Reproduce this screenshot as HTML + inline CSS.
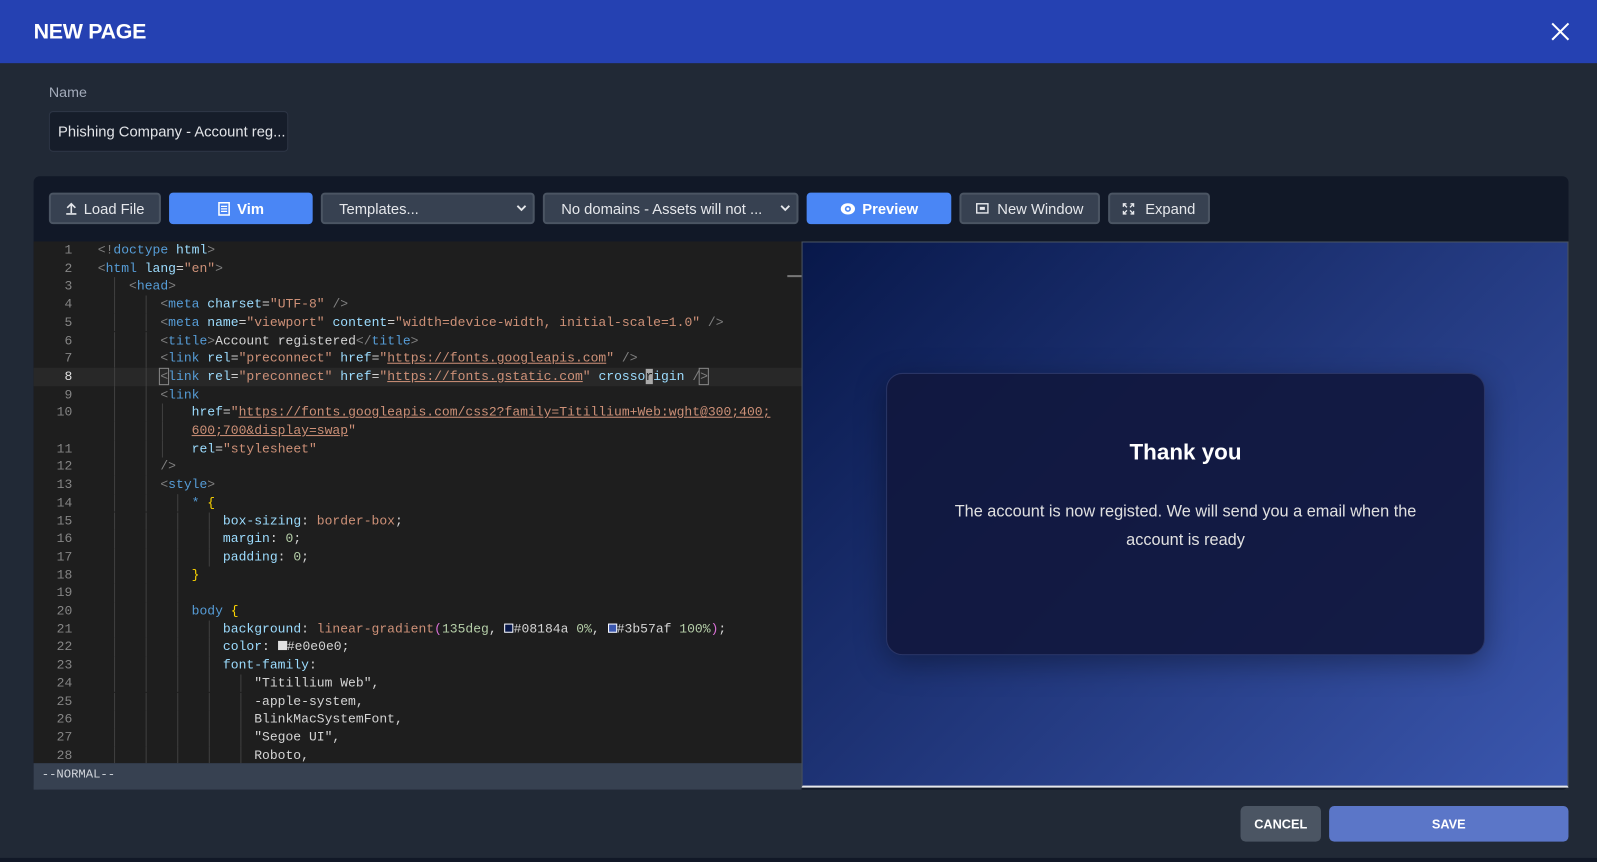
<!DOCTYPE html>
<html><head><meta charset="utf-8"><style>
html,body{margin:0;padding:0;background:#212936;overflow:hidden;width:1597px;height:862px}
#w{position:absolute;left:0;top:0;width:1568px;height:846px;transform:scale(1.01849,1.01891);transform-origin:0 0;font-family:"Liberation Sans",sans-serif;background:#212936}
.hdr{position:absolute;left:0;top:0;width:1568px;height:62px;background:#2541b2}
.hdr .t{position:absolute;left:33px;top:20px;color:#fff;font-size:21px;font-weight:bold;letter-spacing:-.3px}
.lbl{position:absolute;left:48px;top:82px;color:#a3abba;font-size:14px}
.inp{position:absolute;left:48px;top:109px;width:235px;height:40px;background:#161d2a;border:1px solid #2d3545;border-radius:4px;box-sizing:border-box;color:#e2e4e8;font-size:14.5px;line-height:41px;padding-left:8px;white-space:nowrap;overflow:hidden}
.panel{position:absolute;left:33px;top:173px;width:1507px;height:602px;background:#111827;border-radius:6px}
.b{position:absolute;top:189px;height:31px;box-sizing:border-box;border:2px solid #4b5563;background:#374151;border-radius:4px;color:#e5e7eb;font-size:14.5px;line-height:31px;text-align:center;white-space:nowrap}
.b.p{background:#4a86f5;border-color:#4a86f5;color:#fff;font-weight:bold}
.b.s{text-align:left;padding-left:16px}
.b.s svg.c{position:absolute;right:6px;top:10px}
.ed{position:absolute;left:33px;top:237px;width:754px;height:512px;background:#1e1e1e;overflow:hidden}
.ln{position:absolute;left:0;width:754px;height:17.7px;font-family:"Liberation Mono",monospace;font-size:12.8px;line-height:17.7px;white-space:pre;color:#d4d4d4}
.ln .n{position:absolute;left:0;width:38px;text-align:right;color:#858585}
.ln .c{position:absolute;left:63px}
.g{position:absolute;top:0;height:17.7px;width:1px;background:#404040}
.cur{background:#282828}
.tb{color:#808080}.tg{color:#569cd6}.at{color:#9cdcfe}.st{color:#ce9178}.u{color:#ce9178;text-decoration:underline}.nu{color:#b5cea8}.y{color:#ffd700}.pk{color:#da70d6}
.status{position:absolute;left:33px;top:749px;width:754px;height:26px;background:#374151;color:#d1d5db;font-family:"Liberation Mono",monospace;font-size:12px;line-height:22px;padding-left:8px;box-sizing:border-box}
.pv{position:absolute;left:787px;top:237px;width:753px;height:536px;background:linear-gradient(135deg,#08184a 0%,#3b57af 100%);border:1px solid #4b5563;border-bottom:2px solid #e5e7eb;box-sizing:border-box}
.card{position:absolute;left:82px;top:128px;width:588px;height:277px;background:rgba(17,24,62,.93);border:1px solid #2a3566;border-radius:16px;box-sizing:border-box;box-shadow:0 8px 30px rgba(0,0,0,.35);text-align:center;color:#e0e0e0}
.card h1{margin:64px 0 0;font-size:22px;font-weight:bold;color:#fff}
.card p{margin:32px 0 0;font-size:16px;line-height:28px}
.btn2{position:absolute;top:791px;height:35px;border-radius:5px;color:#fff;font-weight:bold;font-size:12.5px;line-height:36px;text-align:center}
</style></head><body><div id="w">
<div class="hdr"><div class="t">NEW PAGE</div>
<svg style="position:absolute;left:1523px;top:22px" width="18" height="18" viewBox="0 0 18 18"><path d="M1 1L17 17M17 1L1 17" stroke="#fff" stroke-width="2"/></svg></div>
<div class="lbl">Name</div>
<div class="inp">Phishing Company - Account reg...</div>
<div class="panel"></div>
<div class="b" style="left:48px;width:110px"><svg width="12" height="13" viewBox="0 0 12 13" style="vertical-align:-1px;margin-right:6px"><path d="M6 11V2M2 6l4-4 4 4M1 12h10" stroke="#e5e7eb" stroke-width="1.6" fill="none"/></svg>Load File</div>
<div class="b p" style="left:166px;width:141px"><svg width="12" height="14" viewBox="0 0 12 14" style="vertical-align:-2px;margin-right:7px"><rect x="1" y="1" width="10" height="12" fill="none" stroke="#fff" stroke-width="1.5"/><path d="M3 4.5h6M3 7h6M3 9.5h6" stroke="#fff" stroke-width="1.2"/></svg>Vim</div>
<div class="b s" style="left:315px;width:210px">Templates...<svg class="c" width="10" height="7" viewBox="0 0 10 7"><path d="M1 1l4 4 4-4" stroke="#e5e7eb" stroke-width="1.8" fill="none"/></svg></div>
<div class="b s" style="left:533px;width:251px">No domains - Assets will not ...<svg class="c" width="10" height="7" viewBox="0 0 10 7"><path d="M1 1l4 4 4-4" stroke="#e5e7eb" stroke-width="1.8" fill="none"/></svg></div>
<div class="b p" style="left:792px;width:142px"><svg width="15" height="12" viewBox="0 0 15 12" style="vertical-align:-1px;margin-right:7px"><ellipse cx="7.5" cy="6" rx="7" ry="5.5" fill="#fff"/><circle cx="7.5" cy="6" r="3" fill="#4a86f5"/><circle cx="7.5" cy="6" r="1.4" fill="#fff"/></svg>Preview</div>
<div class="b" style="left:942px;width:138px"><svg width="13" height="11" viewBox="0 0 13 11" style="vertical-align:0;margin-right:8px"><rect x="1" y="1" width="11" height="9" fill="none" stroke="#e5e7eb" stroke-width="1.4"/><path d="M4 4h5v3H4z" fill="#e5e7eb"/></svg>New Window</div>
<div class="b" style="left:1088px;width:100px"><svg width="12" height="12" viewBox="0 0 12 12" style="vertical-align:-1px;margin-right:10px"><path d="M1 4V1h3M8 1h3v3M11 8v3H8M4 11H1V8M1 1l3.5 3.5M11 1L7.5 4.5M11 11L7.5 7.5M1 11l3.5-3.5" stroke="#e5e7eb" stroke-width="1.3" fill="none"/></svg>Expand</div>

<div class="ed">
<div style="position:absolute;left:740px;top:33px;width:14px;height:2px;background:#777"></div>
<div class="ln" style="top:0"><span class="n">1</span><span class="c"><span class="tb">&lt;!</span><span class="tg">doctype</span> <span class="at">html</span><span class="tb">&gt;</span></span></div>
<div class="ln" style="top:17.7px"><span class="n">2</span><span class="c"><span class="tb">&lt;</span><span class="tg">html</span> <span class="at">lang</span>=<span class="st">"en"</span><span class="tb">&gt;</span></span></div>
<div class="ln" style="top:35.4px"><span class="g" style="left:79px"></span><span class="n">3</span><span class="c">    <span class="tb">&lt;</span><span class="tg">head</span><span class="tb">&gt;</span></span></div>
<div class="ln" style="top:53.1px"><span class="g" style="left:79px"></span><span class="g" style="left:110px"></span><span class="n">4</span><span class="c">        <span class="tb">&lt;</span><span class="tg">meta</span> <span class="at">charset</span>=<span class="st">"UTF-8"</span> <span class="tb">/&gt;</span></span></div>
<div class="ln" style="top:70.8px"><span class="g" style="left:79px"></span><span class="g" style="left:110px"></span><span class="n">5</span><span class="c">        <span class="tb">&lt;</span><span class="tg">meta</span> <span class="at">name</span>=<span class="st">"viewport"</span> <span class="at">content</span>=<span class="st">"width=device-width, initial-scale=1.0"</span> <span class="tb">/&gt;</span></span></div>
<div class="ln" style="top:88.5px"><span class="g" style="left:79px"></span><span class="g" style="left:110px"></span><span class="n">6</span><span class="c">        <span class="tb">&lt;</span><span class="tg">title</span><span class="tb">&gt;</span>Account registered<span class="tb">&lt;/</span><span class="tg">title</span><span class="tb">&gt;</span></span></div>
<div class="ln" style="top:106.2px"><span class="g" style="left:79px"></span><span class="g" style="left:110px"></span><span class="n">7</span><span class="c">        <span class="tb">&lt;</span><span class="tg">link</span> <span class="at">rel</span>=<span class="st">"preconnect"</span> <span class="at">href</span>=<span class="st">"</span><span class="u">https://fonts.googleapis.com</span><span class="st">"</span> <span class="tb">/&gt;</span></span></div>
<div class="ln cur" style="top:123.9px"><span class="g" style="left:79px"></span><span class="g" style="left:110px"></span><span class="n" style="color:#e0e0e0">8</span><span class="c">        <span class="tb" style="outline:1px solid #888">&lt;</span><span class="tg">link</span> <span class="at">rel</span>=<span class="st">"preconnect"</span> <span class="at">href</span>=<span class="st">"</span><span class="u">https://fonts.gstatic.com</span><span class="st">"</span> <span class="at">crosso<span style="background:#aaa;color:#1e1e1e">r</span>igin</span> <span class="tb">/<span style="outline:1px solid #888">&gt;</span></span></span></div>
<div class="ln" style="top:141.6px"><span class="g" style="left:79px"></span><span class="g" style="left:110px"></span><span class="n">9</span><span class="c">        <span class="tb">&lt;</span><span class="tg">link</span></span></div>
<div class="ln" style="top:159.3px"><span class="g" style="left:79px"></span><span class="g" style="left:110px"></span><span class="g" style="left:126px"></span><span class="n">10</span><span class="c">            <span class="at">href</span>=<span class="st">"</span><span class="u">https://fonts.googleapis.com/css2?family=Titillium+Web:wght@300;400;</span></span></div>
<div class="ln" style="top:177px"><span class="g" style="left:79px"></span><span class="g" style="left:110px"></span><span class="g" style="left:126px"></span><span class="c">            <span class="u">600;700&amp;display=swap</span><span class="st">"</span></span></div>
<div class="ln" style="top:194.7px"><span class="g" style="left:79px"></span><span class="g" style="left:110px"></span><span class="g" style="left:126px"></span><span class="n">11</span><span class="c">            <span class="at">rel</span>=<span class="st">"stylesheet"</span></span></div>
<div class="ln" style="top:212.4px"><span class="g" style="left:79px"></span><span class="g" style="left:110px"></span><span class="n">12</span><span class="c">        <span class="tb">/&gt;</span></span></div>
<div class="ln" style="top:230.1px"><span class="g" style="left:79px"></span><span class="g" style="left:110px"></span><span class="n">13</span><span class="c">        <span class="tb">&lt;</span><span class="tg">style</span><span class="tb">&gt;</span></span></div>
<div class="ln" style="top:247.8px"><span class="g" style="left:79px"></span><span class="g" style="left:110px"></span><span class="g" style="left:141px"></span><span class="n">14</span><span class="c">            <span class="tg">*</span> <span class="y">{</span></span></div>
<div class="ln" style="top:265.5px"><span class="g" style="left:79px"></span><span class="g" style="left:110px"></span><span class="g" style="left:141px"></span><span class="g" style="left:172px"></span><span class="n">15</span><span class="c">                <span class="at">box-sizing</span>: <span class="st">border-box</span>;</span></div>
<div class="ln" style="top:283.2px"><span class="g" style="left:79px"></span><span class="g" style="left:110px"></span><span class="g" style="left:141px"></span><span class="g" style="left:172px"></span><span class="n">16</span><span class="c">                <span class="at">margin</span>: <span class="nu">0</span>;</span></div>
<div class="ln" style="top:300.9px"><span class="g" style="left:79px"></span><span class="g" style="left:110px"></span><span class="g" style="left:141px"></span><span class="g" style="left:172px"></span><span class="n">17</span><span class="c">                <span class="at">padding</span>: <span class="nu">0</span>;</span></div>
<div class="ln" style="top:318.6px"><span class="g" style="left:79px"></span><span class="g" style="left:110px"></span><span class="g" style="left:141px"></span><span class="n">18</span><span class="c">            <span class="y">}</span></span></div>
<div class="ln" style="top:336.3px"><span class="g" style="left:79px"></span><span class="g" style="left:110px"></span><span class="g" style="left:141px"></span><span class="n">19</span></div>
<div class="ln" style="top:354px"><span class="g" style="left:79px"></span><span class="g" style="left:110px"></span><span class="g" style="left:141px"></span><span class="n">20</span><span class="c">            <span class="tg">body</span> <span class="y">{</span></span></div>
<div class="ln" style="top:371.7px"><span class="g" style="left:79px"></span><span class="g" style="left:110px"></span><span class="g" style="left:141px"></span><span class="g" style="left:172px"></span><span class="n">21</span><span class="c">                <span class="at">background</span>: <span class="st">linear-gradient</span><span class="pk">(</span><span class="nu">135deg</span>, <span style="display:inline-block;width:9px;height:9px;border:1px solid #fff;background:#08184a;box-sizing:border-box"></span>#08184a <span class="nu">0%</span>, <span style="display:inline-block;width:9px;height:9px;border:1px solid #fff;background:#3b57af;box-sizing:border-box"></span>#3b57af <span class="nu">100%</span><span class="pk">)</span>;</span></div>
<div class="ln" style="top:389.4px"><span class="g" style="left:79px"></span><span class="g" style="left:110px"></span><span class="g" style="left:141px"></span><span class="g" style="left:172px"></span><span class="n">22</span><span class="c">                <span class="at">color</span>: <span style="display:inline-block;width:9px;height:9px;background:#e0e0e0"></span>#e0e0e0;</span></div>
<div class="ln" style="top:407.1px"><span class="g" style="left:79px"></span><span class="g" style="left:110px"></span><span class="g" style="left:141px"></span><span class="g" style="left:172px"></span><span class="n">23</span><span class="c">                <span class="at">font-family</span>:</span></div>
<div class="ln" style="top:424.8px"><span class="g" style="left:79px"></span><span class="g" style="left:110px"></span><span class="g" style="left:141px"></span><span class="g" style="left:172px"></span><span class="g" style="left:203px"></span><span class="n">24</span><span class="c">                    "Titillium Web",</span></div>
<div class="ln" style="top:442.5px"><span class="g" style="left:79px"></span><span class="g" style="left:110px"></span><span class="g" style="left:141px"></span><span class="g" style="left:172px"></span><span class="g" style="left:203px"></span><span class="n">25</span><span class="c">                    -apple-system,</span></div>
<div class="ln" style="top:460.2px"><span class="g" style="left:79px"></span><span class="g" style="left:110px"></span><span class="g" style="left:141px"></span><span class="g" style="left:172px"></span><span class="g" style="left:203px"></span><span class="n">26</span><span class="c">                    BlinkMacSystemFont,</span></div>
<div class="ln" style="top:477.9px"><span class="g" style="left:79px"></span><span class="g" style="left:110px"></span><span class="g" style="left:141px"></span><span class="g" style="left:172px"></span><span class="g" style="left:203px"></span><span class="n">27</span><span class="c">                    "Segoe UI",</span></div>
<div class="ln" style="top:495.6px"><span class="g" style="left:79px"></span><span class="g" style="left:110px"></span><span class="g" style="left:141px"></span><span class="g" style="left:172px"></span><span class="g" style="left:203px"></span><span class="n">28</span><span class="c">                    Roboto,</span></div>
</div>
<div class="status">--NORMAL--</div>
<div class="pv"><div class="card"><h1>Thank you</h1><p>The account is now registed. We will send you a email when the<br>account is ready</p></div></div>
<div class="btn2" style="left:1218px;width:79px;background:#4b5563">CANCEL</div>
<div class="btn2" style="left:1305px;width:235px;background:#5b76c8">SAVE</div>
<div style="position:absolute;left:0;top:842px;width:1568px;height:4px;background:#111827"></div>
</div></body></html>
